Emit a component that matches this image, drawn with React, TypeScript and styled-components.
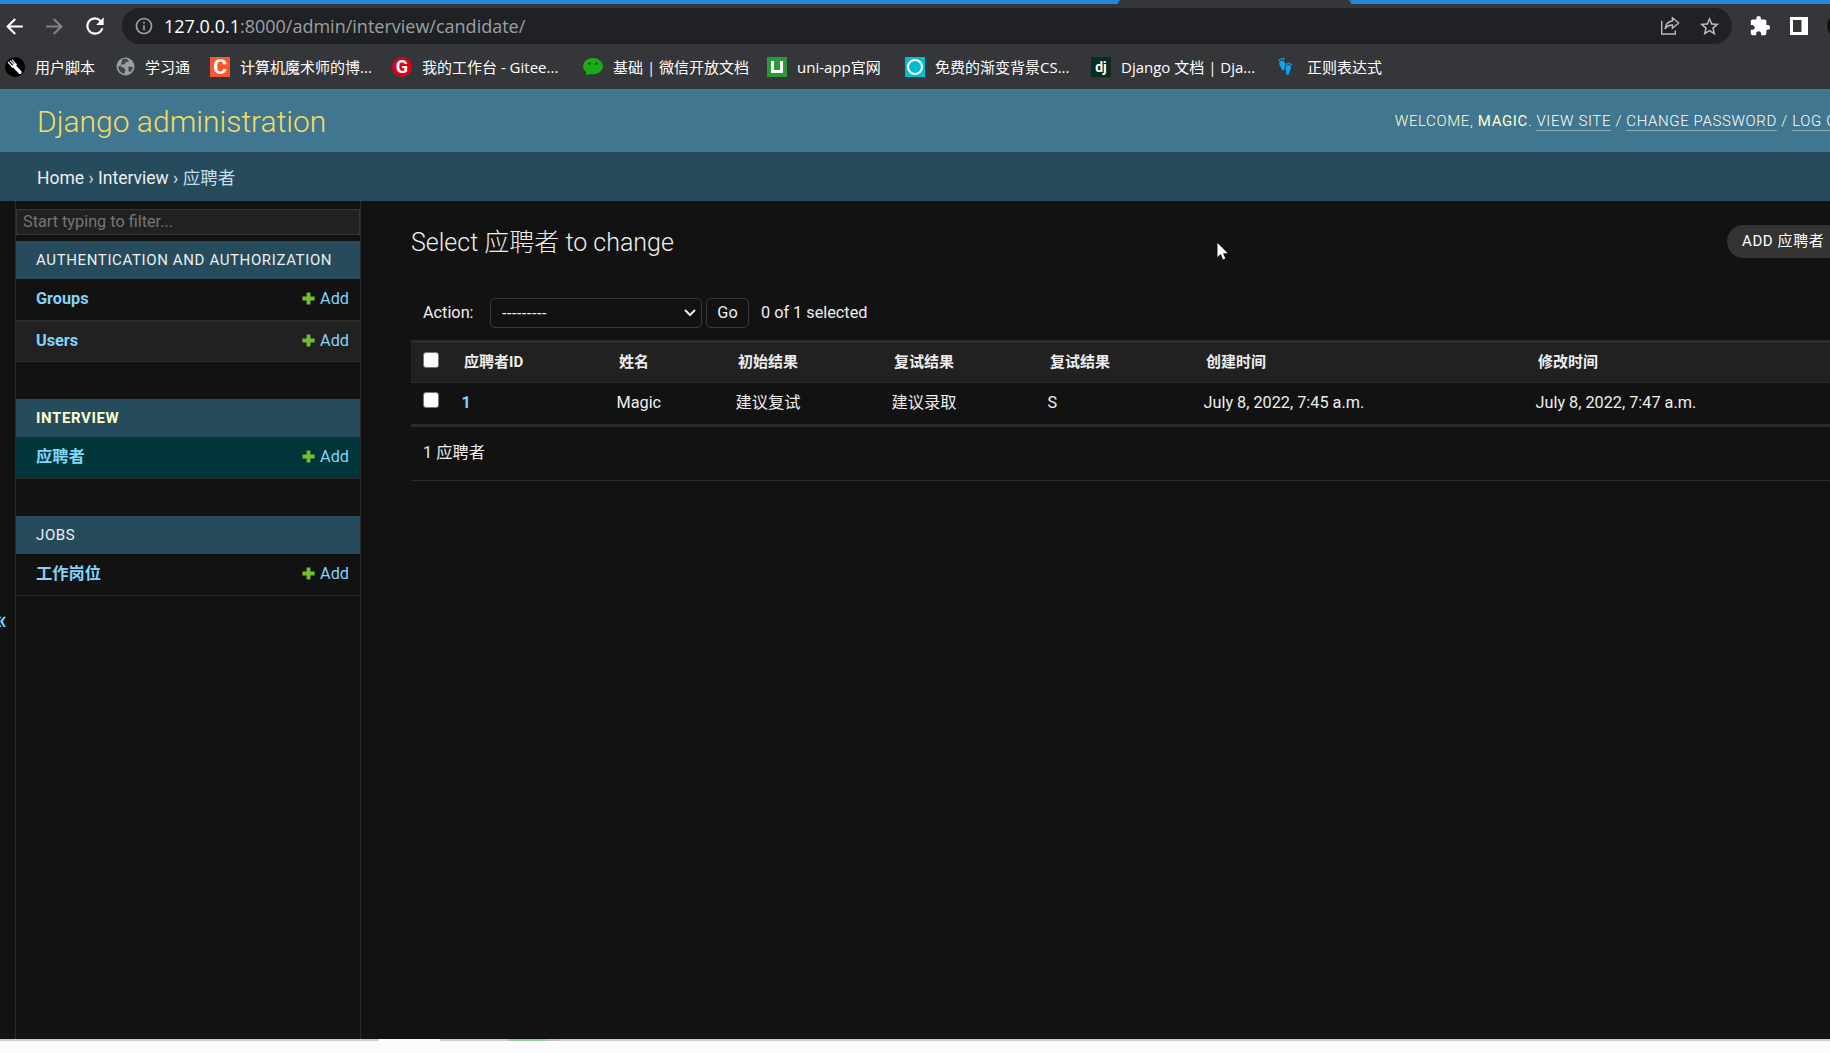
import { createGlobalStyle, styled } from 'styled-components'
import {
  MdArrowBack,
  MdArrowForward,
  MdExtension,
  MdInfoOutline,
  MdRefresh,
  MdStarBorder,
} from 'react-icons/md'

const headers = ['应聘者ID', '姓名', '初始结果', '复试结果', '复试结果', '创建时间', '修改时间']

const candidate = [
  'Magic',
  '建议复试',
  '建议录取',
  'S',
  'July 8, 2022, 7:45 a.m.',
  'July 8, 2022, 7:47 a.m.',
]

export default function App() {
  return (
    <Screen>
      <GlobalStyle />
      <TabStrip>
        <ActiveTab />
      </TabStrip>
      <Toolbar>
        <NavButtons>
          <MdArrowBack size={25} />
          <MdArrowForward size={25} color="#828387" />
          <MdRefresh size={26} />
        </NavButtons>
        <AddressBar>
          <MdInfoOutline size={20} color="#9aa0a6" />
          <Url>
            <b>127.0.0.1</b>:8000/admin/interview/candidate/
          </Url>
          <AddressActions>
            <ShareIcon />
            <MdStarBorder size={23} />
          </AddressActions>
        </AddressBar>
        <Extensions>
          <MdExtension size={22} />
          <SidePanelIcon />
          <Avatar />
        </Extensions>
      </Toolbar>
      <Bookmarks>
        <Bookmark $width={111}>
          <ForkIcon />
          用户脚本
        </Bookmark>
        <Bookmark $width={94}>
          <GlobeIcon />
          学习通
        </Bookmark>
        <Bookmark $width={182}>
          <Favicon $bg="#fc5531" $size={21}>
            C
          </Favicon>
          计算机魔术师的博...
        </Bookmark>
        <Bookmark $width={191}>
          <Favicon $bg="#d9001b" $size={18} $round>
            G
          </Favicon>
          我的工作台 - Gitee...
        </Bookmark>
        <Bookmark $width={184}>
          <WechatIcon />
          基础 | 微信开放文档
        </Bookmark>
        <Bookmark $width={138}>
          <Favicon $bg="#2b9939" $size={16}>
            <UniMark />
          </Favicon>
          uni-app官网
        </Bookmark>
        <Bookmark $width={186}>
          <Favicon $bg="#00bcd4" $size={16}>
            <RingMark />
          </Favicon>
          免费的渐变背景CS...
        </Bookmark>
        <Bookmark $width={186}>
          <Favicon $bg="#092e20" $size={14}>
            dj
          </Favicon>
          Django 文档 | Dja...
        </Bookmark>
        <Bookmark $width={120}>
          <FeetIcon />
          正则表达式
        </Bookmark>
      </Bookmarks>

      <Header>
        <SiteName>Django administration</SiteName>
        <UserTools>
          WELCOME, <strong>MAGIC</strong>. <ToolLink>VIEW SITE</ToolLink> /{' '}
          <ToolLink>CHANGE PASSWORD</ToolLink> / <ToolLink>LOG OUT</ToolLink>
        </UserTools>
      </Header>
      <Breadcrumbs>
        <Crumb>Home</Crumb> › <Crumb>Interview</Crumb> › 应聘者
      </Breadcrumbs>

      <Main>
        <ToggleSidebar>«</ToggleSidebar>
        <Sidebar>
          <Filter placeholder="Start typing to filter..." />
          <Module>
            <Caption>AUTHENTICATION AND AUTHORIZATION</Caption>
            <ModelRow name="Groups" />
            <ModelRow name="Users" variant="odd" />
          </Module>
          <Module>
            <Caption $current>INTERVIEW</Caption>
            <ModelRow name="应聘者" variant="current" />
          </Module>
          <Module>
            <Caption>JOBS</Caption>
            <ModelRow name="工作岗位" />
          </Module>
        </Sidebar>
        <Content>
          <TitleRow>
            <Title>Select 应聘者 to change</Title>
            <AddButton>ADD 应聘者</AddButton>
          </TitleRow>
          <Actions>
            <ActionLabel>Action:</ActionLabel>
            <Select>
              <span>---------</span>
              <ChevronIcon />
            </Select>
            <GoButton>Go</GoButton>
            <Counter>0 of 1 selected</Counter>
          </Actions>
          <HeadRow>
            <CheckCell>
              <Checkbox />
            </CheckCell>
            {headers.map((header, index) => (
              <HeadCell key={index}>{header}</HeadCell>
            ))}
          </HeadRow>
          <ResultRow>
            <CheckCell>
              <Checkbox />
            </CheckCell>
            <Cell>
              <IdLink>1</IdLink>
            </Cell>
            {candidate.map((value) => (
              <Cell key={value}>{value}</Cell>
            ))}
          </ResultRow>
          <Paginator>1 应聘者</Paginator>
        </Content>
        <Cursor />
      </Main>
      <BottomEdge>
        <EdgeMark $left={379} $width={61} $color="#fff" />
        <EdgeMark $left={508} $width={39} $color="#97cb94" />
        <EdgeMark $left={547} $width={12} $color="#ccb9cb" />
      </BottomEdge>
    </Screen>
  )
}

type Variant = 'plain' | 'odd' | 'current'

function ModelRow({ name, variant = 'plain' }: { name: string; variant?: Variant }) {
  return (
    <Model $variant={variant}>
      <ModelName>{name}</ModelName>
      <AddLink>
        <PlusIcon />
        Add
      </AddLink>
    </Model>
  )
}

function PlusIcon() {
  return (
    <svg width="13" height="13" viewBox="0 0 13 13">
      <path d="M4.6 0.4h3.8v4.2h4.2v3.8H8.4v4.2H4.6V8.4H0.4V4.6h4.2z" fill="#70bf2b" />
    </svg>
  )
}

function ShareIcon() {
  return (
    <svg width="20" height="20" viewBox="0 0 20 20" fill="none" stroke="#b9bbbe" strokeWidth="1.4">
      <path d="M1.7 4.8v13.2h13.6v-3.6" />
      <path d="M12.4 1.8 18.6 7l-6.2 5.2V9C8.8 9 6.6 10.4 5 13c.5-4.5 3-7.5 7.4-8z" />
    </svg>
  )
}

function SidePanelIcon() {
  return (
    <svg width="18" height="18" viewBox="0 0 18 18">
      <path d="M0 0h18v18H0zM3 3v12h8.5V3z" fill="#fff" fillRule="evenodd" />
    </svg>
  )
}

function ForkIcon() {
  return (
    <svg width="20" height="20" viewBox="0 0 20 20" stroke="#fff" fill="none">
      <circle cx="10" cy="10" r="10" fill="#000" stroke="none" />
      <path d="M9.5 9.5l5.5 5.7" strokeWidth="3.4" strokeLinecap="round" />
      <path d="M3 5l4.6 5M5 3.6l4.6 4.8M7.2 2.8l3.6 4.6" strokeWidth="1.2" />
      <path d="M6.8 10.2L11.5 7" strokeWidth="2.2" />
    </svg>
  )
}

function GlobeIcon() {
  return (
    <svg width="19" height="19" viewBox="0 0 19 19">
      <circle cx="9.5" cy="9.5" r="9" fill="#9aa0a6" />
      <path
        d="M6.5 2.2c3.5-1.2 6 .3 6.3 2.3l-3 .8-1.3 2.2-3-.2-.8 2.2 3.8 1.4 1 2.6-1.3 3.3C5 16.5 2.2 13 2 9.5l2.5-.8z"
        fill="#45474c"
      />
      <path d="M12.5 9.5l4.3.6c-.3 2.4-1.5 4.3-3.3 5.5l-1.2-2.7z" fill="#45474c" />
    </svg>
  )
}

function WechatIcon() {
  return (
    <svg width="20" height="18" viewBox="0 0 20 18">
      <ellipse cx="10" cy="8.2" rx="10" ry="8.2" fill="#1aad19" />
      <path d="M3 13l.3 4.6 4.2-2z" fill="#1aad19" />
      <circle cx="6.6" cy="5.6" r="1.4" fill="#0c590c" />
      <circle cx="13.4" cy="5.6" r="1.4" fill="#0c590c" />
    </svg>
  )
}

function FeetIcon() {
  return (
    <svg width="20" height="20" viewBox="0 0 20 20" fill="#03a9f4">
      <path d="M2.3 7.200c-.6-2.2.6-3.5 2.6-3.5 2.2 0 3.5 1.7 3.1 3.9-.3 1.500-.7 2.300-.4 3.900.3 2-2.700 2.500-3.100.5-.3-1.800-1.700-2.900-2.200-4.800z" />
      <path d="M8.600 11.200c0-2.200 1.300-3.500 3.200-3.200 1.900.3 2.600 1.900 2 3.800-.6 1.900-1.500 2.600-1.600 4.500-.1 2.200-3.200 2-3.100-.1.100-1.800-.5-3-.5-5z" />
      <circle cx="2.2" cy="3.2" r="0.9" />
      <circle cx="4.2" cy="2" r="0.9" />
      <circle cx="6.4" cy="1.9" r="1.1" />
      <circle cx="10" cy="6.9" r="0.9" />
      <circle cx="12.2" cy="6.4" r="0.9" />
      <circle cx="14.1" cy="7.4" r="0.9" />
    </svg>
  )
}

function ChevronIcon() {
  return (
    <svg width="12" height="8" viewBox="0 0 12 8" fill="none" stroke="#eee" strokeWidth="2">
      <path d="M1 1l5 5 5-5" />
    </svg>
  )
}

function Cursor() {
  return (
    <CursorSvg width="12" height="18" viewBox="0 0 12 18">
      <path d="M0.5 0v14l3.2-3 2.3 5.5 2.3-1L6 10.2h4.700z" fill="#fff" />
    </CursorSvg>
  )
}

const GlobalStyle = createGlobalStyle`
  * {
    box-sizing: border-box;
  }

  body {
    margin: 0;
    overflow: hidden;
    background: #121212;
  }
`

const Screen = styled.div`
  display: flex;
  flex-direction: column;
  width: 1830px;
  height: 1053px;
  overflow: hidden;
  background: #121212;
  color: #eee;
  font-family: Roboto, 'Noto Sans CJK SC', sans-serif;
  font-size: 16.25px;
  white-space: nowrap;
`

const TabStrip = styled.div`
  height: 4px;
  flex-shrink: 0;
  padding-left: 1118px;
  background: #2188dc;
`

const ActiveTab = styled.div`
  width: 233px;
  height: 4px;
  background: #35363a;
  border-radius: 4px 4px 0 0;
`

const Toolbar = styled.div`
  display: flex;
  align-items: center;
  height: 44px;
  flex-shrink: 0;
  background: #35363a;
  color: #fff;
`

const NavButtons = styled.div`
  display: flex;
  align-items: center;
  gap: 15px;
  width: 122px;
  flex-shrink: 0;
  padding-left: 2px;
`

const AddressBar = styled.div`
  display: flex;
  align-items: center;
  width: 1610px;
  height: 36px;
  flex-shrink: 0;
  padding: 0 11px 0 12px;
  border-radius: 18px;
  background: #202124;
`

const Url = styled.div`
  margin-left: 10px;
  color: #9aa0a6;
  font-family: 'Open Sans', sans-serif;
  font-size: 18px;

  b {
    color: #fff;
    font-weight: 400;
  }
`

const AddressActions = styled.div`
  display: flex;
  align-items: center;
  gap: 18px;
  margin-left: auto;
  color: #b9bbbe;
`

const Extensions = styled.div`
  display: flex;
  align-items: center;
  gap: 19px;
  flex-shrink: 0;
  margin-left: 17px;
`

const Avatar = styled.div`
  width: 26px;
  height: 26px;
  flex-shrink: 0;
  border-radius: 50%;
  background: #111;
`

const Bookmarks = styled.div`
  display: flex;
  align-items: center;
  height: 41px;
  flex-shrink: 0;
  padding: 0 0 4px 5px;
  background: #35363a;
`

const Bookmark = styled.div<{ $width: number }>`
  display: flex;
  align-items: center;
  gap: 10px;
  width: ${({ $width }) => $width}px;
  color: #fff;
  font-family: 'Open Sans', 'Noto Sans CJK SC', sans-serif;
  font-size: 15px;
  line-height: 20px;

  svg {
    flex-shrink: 0;
  }
`

const Favicon = styled.span<{ $bg: string; $size: number; $round?: boolean }>`
  display: flex;
  align-items: center;
  justify-content: center;
  width: 20px;
  height: 20px;
  flex-shrink: 0;
  border-radius: ${({ $round }) => ($round ? '50%' : '0')};
  background: ${({ $bg }) => $bg};
  color: #fff;
  font-family: Roboto, sans-serif;
  font-size: ${({ $size }) => $size}px;
  font-weight: 700;
  line-height: 20px;
`

const UniMark = styled.span`
  width: 12px;
  height: 12px;
  border: 3px solid #fff;
  border-top: 0;
`

const RingMark = styled.span`
  width: 16px;
  height: 16px;
  border: 2.5px solid #fff;
  border-radius: 50%;
`

const Header = styled.header`
  display: flex;
  align-items: center;
  width: 1857px;
  height: 63px;
  flex-shrink: 0;
  padding: 1px 0 0 37px;
  background: #417690;
  color: #ffc;
`

const SiteName = styled.h1`
  margin: 0;
  color: #f5dd5d;
  font-size: 30px;
  font-weight: 300;
`

const UserTools = styled.div`
  margin-left: auto;
  font-size: 15px;
  font-weight: 300;
  letter-spacing: 0.625px;
`

const ToolLink = styled.a`
  border-bottom: 1px solid rgba(255, 255, 255, 0.4);
  color: #fff;
`

const Breadcrumbs = styled.div`
  height: 49px;
  flex-shrink: 0;
  padding-left: 37px;
  background: #264b5d;
  color: #c4dce8;
  font-size: 17.5px;
  line-height: 52px;
`

const Crumb = styled.a`
  color: #eee;
`

const Main = styled.main`
  position: relative;
  display: flex;
  height: 838px;
  flex-shrink: 0;
`

const ToggleSidebar = styled.div`
  display: flex;
  align-items: center;
  justify-content: flex-end;
  width: 16px;
  flex-shrink: 0;
  padding-right: 8px;
  border-right: 1px solid #2c2c2c;
  overflow: hidden;
  color: #81d4fa;
  font-size: 25px;
  font-weight: 500;
`

const Sidebar = styled.nav`
  width: 345px;
  flex-shrink: 0;
  padding-top: 8px;
  border-right: 1px solid #2c2c2c;
`

const Filter = styled.input`
  display: block;
  width: 344px;
  height: 26px;
  margin-bottom: 6px;
  padding: 0 6px 2px;
  border: 1px solid #353535;
  background: #212121;
  font-family: inherit;
  font-size: 16.25px;

  &::placeholder {
    color: #757575;
  }
`

const Module = styled.section`
  margin-bottom: 37px;
`

const Caption = styled.h2<{ $current?: boolean }>`
  height: 38px;
  margin: 0;
  padding-left: 20px;
  background: #264b5d;
  color: ${({ $current }) => ($current ? '#ffc' : '#eee')};
  font-size: 15px;
  font-weight: ${({ $current }) => ($current ? 700 : 400)};
  letter-spacing: 0.625px;
  line-height: 38px;
`

const rowColors = {
  plain: '#121212',
  odd: '#212121',
  current: '#00363a',
}

const Model = styled.div<{ $variant: Variant }>`
  display: flex;
  align-items: center;
  justify-content: space-between;
  height: 42px;
  padding: 0 11px 2px 20px;
  border-bottom: 1px solid #2c2c2c;
  background: ${({ $variant }) => rowColors[$variant]};
  color: #81d4fa;
  line-height: 20px;

  & + & {
    height: 41px;
    border-top: 1px solid #2c2c2c;
  }
`

const ModelName = styled.a`
  font-weight: 700;
`

const AddLink = styled.a`
  display: flex;
  align-items: center;
  gap: 5px;
`

const Content = styled.div`
  width: 1443px;
  flex-shrink: 0;
  margin-left: 50px;
`

const TitleRow = styled.div`
  display: flex;
  justify-content: space-between;
  height: 97px;
  padding-top: 24px;
`

const Title = styled.h1`
  margin: 0;
  color: #eee;
  font-size: 25px;
  font-weight: 300;
  line-height: 36px;
`

const AddButton = styled.a`
  width: 127px;
  height: 33px;
  padding-left: 15px;
  border-radius: 17px;
  background: #333;
  color: #fff;
  font-size: 15px;
  letter-spacing: 0.6px;
  line-height: 32px;
`

const Actions = styled.div`
  display: flex;
  align-items: center;
  height: 42px;
  padding: 0 0 12px 12px;
`

const ActionLabel = styled.label`
  width: 67px;
  padding-bottom: 2px;
`

const Select = styled.div`
  display: flex;
  align-items: center;
  justify-content: space-between;
  width: 212px;
  height: 30px;
  margin-right: 4px;
  padding: 0 5px 0 11px;
  border: 1px solid #3a3a3a;
  border-radius: 5px;

  span {
    letter-spacing: 0.5px;
  }
`

const GoButton = styled.button`
  width: 43px;
  height: 30px;
  padding: 0 0 2px;
  border: 1px solid #3a3a3a;
  border-radius: 5px;
  background: none;
  color: #eee;
  font: inherit;
`

const Counter = styled.span`
  margin-left: 12px;
  padding-bottom: 2px;
`

const Row = styled.div`
  display: grid;
  grid-template-columns: 38px 155px 119px 156px 156px 156px 332px 331px;
`

const HeadRow = styled(Row)`
  height: 43px;
  border-top: 3px solid #2b2b2b;
  border-bottom: 1px solid #2b2b2b;
  background: #212121;
`

const ResultRow = styled(Row)`
  height: 44px;
  border-bottom: 3px solid #2b2b2b;
`

const CheckCell = styled.div`
  padding: 9px 0 0 12px;
`

const Checkbox = styled.div`
  width: 16px;
  height: 16px;
  border: 1px solid #767676;
  border-radius: 3px;
  background: #fff;
`

const HeadCell = styled.div`
  padding-left: 15px;
  font-size: 15px;
  font-weight: 700;
  line-height: 39px;
`

const Cell = styled.div`
  padding-left: 12.5px;
  line-height: 39px;
`

const IdLink = styled.a`
  color: #81d4fa;
  font-weight: 700;
`

const Paginator = styled.div`
  height: 54px;
  padding-left: 12px;
  border-bottom: 1px solid #2c2c2c;
  line-height: 51px;
`

const CursorSvg = styled.svg`
  position: absolute;
  left: 1217px;
  top: 42px;
`

const BottomEdge = styled.div`
  position: relative;
  height: 14px;
  flex-shrink: 0;
  border-top: 2px solid #d0cfd0;
  background: #fbfbfb;
`

const EdgeMark = styled.span<{ $left: number; $width: number; $color: string }>`
  position: absolute;
  left: ${({ $left }) => $left}px;
  top: -2px;
  width: ${({ $width }) => $width}px;
  height: 2px;
  background: ${({ $color }) => $color};
`
